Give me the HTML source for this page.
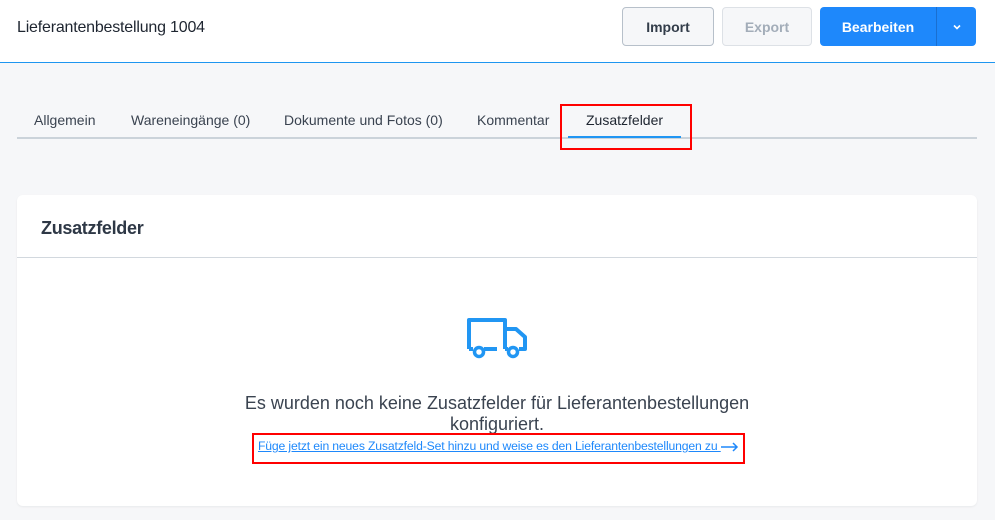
<!DOCTYPE html>
<html><head><meta charset="utf-8"><style>
*{box-sizing:border-box;margin:0;padding:0}
body{width:995px;height:520px;background:#f6f7f9;font-family:"Liberation Sans",Arial,sans-serif;position:relative;overflow:hidden;color:#333}
.hdr{position:absolute;left:0;top:0;width:995px;height:63px;background:#fff;border-bottom:1px solid #1e96f0}
.title{position:absolute;left:17px;top:19px;font-size:16px;color:#1e2530;letter-spacing:-0.2px}
.btn{position:absolute;top:7px;height:39px;border-radius:4px;font-size:14px;font-weight:bold;display:flex;align-items:center;justify-content:center}
.imp{left:622px;width:92px;border:1px solid #b7c0ca;background:#f6f7f9;color:#333d4a}
.exp{left:722px;width:90px;border:1px solid #dde1e6;background:#f6f7f9;color:#a3adb9}
.bea{left:820px;width:116px;background:#1e88fb;color:#fff;border-radius:4px 0 0 4px}
.car{left:936px;width:40px;background:#1e88fb;border-left:1px solid #1a6fd0;border-radius:0 4px 4px 0}
.tabs{position:absolute;left:17px;top:112px;width:960px;height:27px;border-bottom:2px solid #cbd3da;font-size:14px;color:#3a4350}
.tabs span{position:absolute;top:0}
.ul{position:absolute;left:568px;top:136px;width:113px;height:2px;background:#2196f3}
.red{position:absolute;border:2px solid #f00}
.card{position:absolute;left:17px;top:195px;width:960px;height:311px;background:#fff;border-radius:6px;box-shadow:0 1px 2px rgba(0,0,0,.06)}
.ch{height:63px;border-bottom:1px solid #d2d8de;padding:23px 0 0 24px;font-size:18px;font-weight:bold;color:#2e3846;letter-spacing:-0.3px}
.msg{position:absolute;left:0;width:960px;top:198px;text-align:center;font-size:18px;line-height:21px;color:#3a4350}
.link{position:absolute;left:258px;top:439px;font-size:12.2px;color:#1e88fb;text-decoration:underline;white-space:nowrap;letter-spacing:-0.15px}
</style></head><body>
<div class="hdr">
<div class="title">Lieferantenbestellung 1004</div>
<div class="btn imp">Import</div>
<div class="btn exp">Export</div>
<div class="btn bea">Bearbeiten</div>
<div class="btn car"><svg width="10" height="6" viewBox="0 0 10 6"><path d="M2 1.5 L5 4.5 L8 1.5" stroke="#fff" stroke-width="1.6" fill="none"/></svg></div>
</div>
<div class="tabs">
<span style="left:17px">Allgemein</span>
<span style="left:114px">Wareneingänge (0)</span>
<span style="left:267px">Dokumente und Fotos (0)</span>
<span style="left:460px">Kommentar</span>
<span style="left:569px;color:#1e2530">Zusatzfelder</span>
</div>
<div class="ul"></div>
<div class="red" style="left:560px;top:104px;width:132px;height:46px"></div>
<div class="card">
<svg style="position:absolute;left:449px;top:122px" width="64" height="44" viewBox="0 0 64 44">
<path d="M3 32 V3 H39 V32 M39 12 H50 L59 20 V32 H53 M39 32 H42 M3 32 H7 M18 32 H31" stroke="#2196f3" stroke-width="4" fill="none" stroke-linejoin="round"/>
<circle cx="13" cy="35" r="4.5" stroke="#2196f3" stroke-width="3.5" fill="#fff"/>
<circle cx="47" cy="35" r="4.5" stroke="#2196f3" stroke-width="3.5" fill="#fff"/>
</svg>
<div class="ch">Zusatzfelder</div>
<div class="msg">Es wurden noch keine Zusatzfelder für Lieferantenbestellungen<br>konfiguriert.</div>
</div>
<div class="link">Füge jetzt ein neues Zusatzfeld-Set hinzu und weise es den Lieferantenbestellungen zu <svg style="vertical-align:middle" width="18" height="10" viewBox="0 0 18 10"><path d="M0 5 H16 M12 1 L16 5 L12 9" stroke="#1e88fb" stroke-width="1.5" fill="none"/></svg></div>
<div class="red" style="left:252px;top:433px;width:493px;height:31px"></div>
</body></html>
